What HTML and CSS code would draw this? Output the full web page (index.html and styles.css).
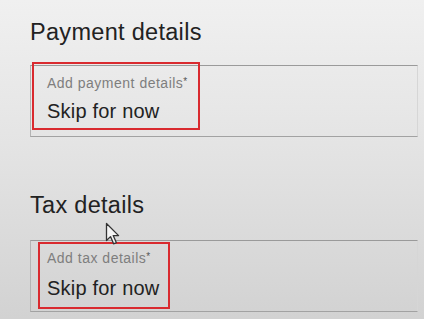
FILE: index.html
```html
<!DOCTYPE html>
<html lang="en">
<head>
  <meta charset="UTF-8" />
  <meta name="viewport" content="width=device-width, initial-scale=1.0"/>
  <title>Payment and tax details</title>
  <link rel="stylesheet" href="styles.css">
</head>
<body>
  <div class="page">
    <section class="group first">
      <h2>Payment details</h2>
      <div class="field">
        <div class="label">Add payment details<span class="req">*</span></div>
        <div class="value">Skip for now</div>
        <span class="mark mark-pay"></span>
      </div>
    </section>

    <section class="group second">
      <h2>Tax details</h2>
      <div class="field">
        <div class="label">Add tax details<span class="req">*</span></div>
        <div class="value">Skip for now</div>
        <span class="mark mark-tax"></span>
      </div>
    </section>
  </div>

  <svg class="cursor" width="15" height="24" viewBox="0 0 15 24">
    <path d="M1.5 1.5 L1.5 18.5 L5.5 14.6 L8.6 21.8 L11.3 20.6 L8.2 13.6 L13.6 13.6 Z" fill="#f4f4f4" stroke="#333" stroke-width="1.3" stroke-linejoin="round"/>
  </svg>
</body>
</html>
```

FILE: styles.css
```css
body { margin: 0; height: 319px; overflow: hidden; font-family: "Liberation Sans", Arial, sans-serif; background: linear-gradient(to bottom, #f0f0f0 0%, #e4e4e4 45%, #d2d2d2 100%); position: relative; }
.page { padding: 18px 6px 0 30px; }

.group h2 { margin: 0; font-size: 23.5px; line-height: 28px; font-weight: normal; letter-spacing: 0.3px; color: #222; }
.group.first h2 { margin-bottom: 19px; }
.group.second { margin-top: 54px; }
.group.second h2 { margin-bottom: 21px; }

.field {
  position: relative;
  border: 1px solid #b4b4b4;
  border-top-color: #9a9a9a;
  border-bottom-color: #a2a2a2;
  border-right-color: #d6d6d6;
  padding: 9px 16px 13px;
}

.label { font-size: 14px; line-height: 16px; letter-spacing: 0.5px; color: #7e7e7e; }
.label .req { font-size: 10px; line-height: 0; vertical-align: 3px; letter-spacing: 0; color: #555; }
.value { margin-top: 8px; font-size: 20px; line-height: 24px; letter-spacing: 0.2px; color: #222; }
.second .value { margin-top: 10px; }
.second .field { padding-bottom: 11px; }

/* red annotation boxes drawn on top of the fields */
.mark { position: absolute; border: 2px solid #d92a2f; box-sizing: border-box; }
.mark-pay { left: 1px; top: -4px; width: 168px; height: 68px; }
.mark-tax { left: 7px; top: 1px; width: 132px; height: 67px; }

.cursor { position: absolute; left: 105px; top: 222px; }
```
